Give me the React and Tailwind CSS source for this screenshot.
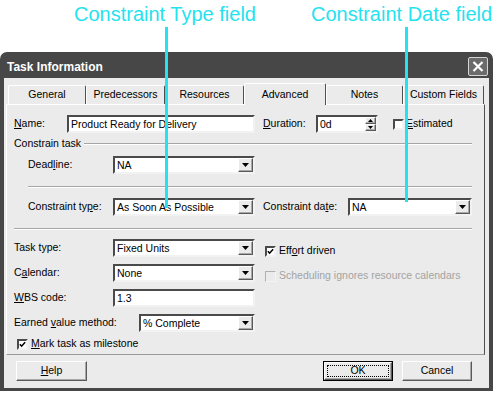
import React from 'react';

const sunken =
  'border-2 border-t-[#4a4a4a] border-l-[#4a4a4a] border-b-[#f2f2f2] border-r-[#f2f2f2]';
const raised =
  'border border-t-white border-l-white border-b-[#5a5a5a] border-r-[#5a5a5a] shadow-[inset_-1px_-1px_0_#a8a8a8]';

const Down = () => (
  <svg width="7" height="4" viewBox="0 0 7 4">
    <path d="M0 0h7L3.5 4z" fill="#000" />
  </svg>
);

const Up = () => (
  <svg width="5" height="3" viewBox="0 0 5 3">
    <path d="M0 3h5L2.5 0z" fill="#000" />
  </svg>
);

const SmallDown = () => (
  <svg width="5" height="3" viewBox="0 0 5 3">
    <path d="M0 0h5L2.5 3z" fill="#000" />
  </svg>
);

const Combo = ({ value, w }) => (
  <div className={`flex h-[18px] bg-white ${sunken} ${w}`}>
    <span className="flex-1 truncate pl-[2px] leading-[14px]">{value}</span>
    <div className={`flex h-full w-[15px] shrink-0 items-center justify-center bg-[#ebebeb] ${raised}`}>
      <Down />
    </div>
  </div>
);

const TextBox = ({ value, w }) => (
  <div className={`flex h-[18px] bg-white ${sunken} ${w}`}>
    <span className="flex-1 truncate pl-[2px] leading-[14px]">{value}</span>
  </div>
);

const Check = ({ checked, disabled }) => (
  <div
    className={`flex h-[11px] w-[11px] shrink-0 items-center justify-center ${
      disabled
        ? 'border border-t-[#b0b0b0] border-l-[#b0b0b0] border-b-[#f4f4f4] border-r-[#f4f4f4] bg-[#ebebeb]'
        : 'border-2 border-t-[#4a4a4a] border-l-[#4a4a4a] border-b-[#f2f2f2] border-r-[#f2f2f2] bg-white'
    }`}
  >
    {checked && (
      <svg width="8" height="7" viewBox="0 0 8 7">
        <path d="M1 3.2 L3 5.4 L7 1" fill="none" stroke="#000" strokeWidth="1.8" />
      </svg>
    )}
  </div>
);

const Sep = ({ className = '' }) => (
  <div className={`h-[2px] border-t border-b border-t-[#a6a6a6] border-b-white ${className}`} />
);

const tabs = [
  { label: 'General', w: 'w-[78px]' },
  { label: 'Predecessors', w: 'w-[79px]' },
  { label: 'Resources', w: 'w-[79px]' },
  { label: 'Advanced', w: 'w-[82px]', active: true },
  { label: 'Notes', w: 'w-[77px]' },
  { label: 'Custom Fields', w: 'w-[81px]' },
];

export default function App() {
  return (
    <div className="relative h-[397px] w-[500px] overflow-hidden bg-white font-['Liberation_Sans',Arial,sans-serif] text-[10.5px] text-black">
      {/* callout labels */}
      <div className="flex h-[52px] text-[20px] leading-none text-[#25e2ee]">
        <span className="ml-[74px] mt-[4px]">Constraint Type field</span>
        <span className="ml-[55px] mt-[4px]">Constraint Date field</span>
      </div>

      {/* dialog */}
      <div className="flex h-[339px] w-[493px] flex-col rounded-t-[7px] bg-[#474747] px-[4px] pb-[3px]">
        <div className="flex h-[26px] items-center justify-between pl-[3px] pr-[1px] pt-[3px]">
          <span className="text-[12px] font-bold text-white">Task Information</span>
          <div className="flex h-[19px] w-[20px] items-center justify-center rounded-[2px] border border-[#d4d4d4] bg-[#6b6b6b]">
            <svg width="12" height="11" viewBox="0 0 12 11">
              <path d="M1.5 1 L10.5 10 M10.5 1 L1.5 10" stroke="#fff" strokeWidth="2.2" />
            </svg>
          </div>
        </div>

        <div className="flex flex-1 flex-col bg-[#ebebeb] pt-[5px]">
          {/* tabs */}
          <div className="ml-[4px] flex h-[21px] items-end">
            {tabs.map((t) => (
              <div
                key={t.label}
                className={`flex items-center justify-center rounded-t-[2px] border-t border-l border-r border-t-white border-l-white border-r-[#4f4f4f] bg-[#ebebeb] ${t.w} ${
                  t.active ? 'relative z-10 -mb-px h-[22px]' : 'h-[19px]'
                }`}
              >
                {t.label}
              </div>
            ))}
          </div>

          {/* panel */}
          <div className="ml-[2px] flex h-[251px] w-[479px] flex-col border border-t-white border-l-white border-r-[#4f4f4f] border-b-[#9a9a9a] pl-[7px] pr-[12px]">
            <div className="mt-[10px] flex h-[18px] items-center">
              <span className="w-[53px]">
                <u>N</u>ame:
              </span>
              <TextBox value="Product Ready for Delivery" w="w-[188px]" />
              <span className="ml-[8px] w-[53px]">
                <u>D</u>uration:
              </span>
              <div className={`flex h-[18px] w-[62px] bg-white ${sunken}`}>
                <span className="flex-1 pl-[2px] leading-[14px]">0d</span>
                <div className="flex w-[11px] flex-col">
                  <div className={`flex flex-1 items-center justify-center bg-[#ebebeb] ${raised}`}>
                    <Up />
                  </div>
                  <div className={`flex flex-1 items-center justify-center bg-[#ebebeb] ${raised}`}>
                    <SmallDown />
                  </div>
                </div>
              </div>
              <div className="ml-[15px]">
                <Check />
              </div>
              <span className="ml-[2px]">
                <u>E</u>stimated
              </span>
            </div>

            <div className="mt-[4px] flex h-[14px] items-center">
              <span>Constrain task</span>
              <Sep className="ml-[3px] flex-1" />
            </div>

            <div className="ml-[14px] mt-[5px] flex h-[18px] items-center">
              <span className="w-[85px]">
                Dead<u>l</u>ine:
              </span>
              <Combo value="NA" w="w-[142px]" />
            </div>

            <Sep className="ml-[14px] mt-[12px]" />

            <div className="ml-[14px] mt-[10px] flex h-[18px] items-center">
              <span className="w-[85px]">
                Constraint ty<u>p</u>e:
              </span>
              <Combo value="As Soon As Possible" w="w-[142px]" />
              <span className="ml-[8px] w-[85px]">
                Constraint da<u>t</u>e:
              </span>
              <Combo value="NA" w="w-[124px]" />
            </div>

            <Sep className="mt-[12px]" />

            <div className="mt-[9px] flex">
              <div className="flex w-[251px] flex-col gap-[7px]">
                <div className="flex h-[18px] items-center">
                  <span className="w-[99px]">Task type:</span>
                  <Combo value="Fixed Units" w="w-[142px]" />
                </div>
                <div className="flex h-[18px] items-center">
                  <span className="w-[99px]">
                    C<u>a</u>lendar:
                  </span>
                  <Combo value="None" w="w-[142px]" />
                </div>
                <div className="flex h-[18px] items-center">
                  <span className="w-[99px]">
                    <u>W</u>BS code:
                  </span>
                  <TextBox value="1.3" w="w-[142px]" />
                </div>
                <div className="flex h-[18px] items-center">
                  <span className="w-[125px]">
                    Earned <u>v</u>alue method:
                  </span>
                  <Combo value="% Complete" w="w-[116px]" />
                </div>
                <div className="-mt-[2px] flex h-[14px] items-center pl-[3px]">
                  <Check checked />
                  <span className="ml-[3px]">
                    <u>M</u>ark task as milestone
                  </span>
                </div>
              </div>

              <div className="flex flex-col pt-[5px]">
                <div className="flex h-[14px] items-center">
                  <Check checked />
                  <span className="ml-[3px]">
                    Eff<u>o</u>rt driven
                  </span>
                </div>
                <div className="mt-[11px] flex h-[14px] items-center">
                  <Check disabled />
                  <span className="ml-[3px] text-[#a3a3a3]">Scheduling ignores resource calendars</span>
                </div>
              </div>
            </div>
          </div>

          {/* buttons */}
          <div className="mt-[6px] flex">
            <div className={`ml-[12px] flex h-[20px] w-[71px] items-center justify-center bg-[#ebebeb] ${raised}`}>
              <span>
                <u>H</u>elp
              </span>
            </div>
            <div className="ml-[236px] flex h-[20px] w-[70px] border border-black bg-[#ebebeb]">
              <div className={`flex flex-1 p-[2px] ${raised}`}>
                <div className="flex flex-1 items-center justify-center border border-dotted border-black">
                  OK
                </div>
              </div>
            </div>
            <div className={`ml-[9px] flex h-[20px] w-[70px] items-center justify-center bg-[#ebebeb] ${raised}`}>
              Cancel
            </div>
          </div>
        </div>
      </div>

      {/* leader lines */}
      <div className="absolute left-[165px] top-[27px] h-[181px] w-[3px] bg-[#25e2ee]" />
      <div className="absolute left-[405px] top-[27px] h-[175px] w-[3px] bg-[#25e2ee]" />
    </div>
  );
}
